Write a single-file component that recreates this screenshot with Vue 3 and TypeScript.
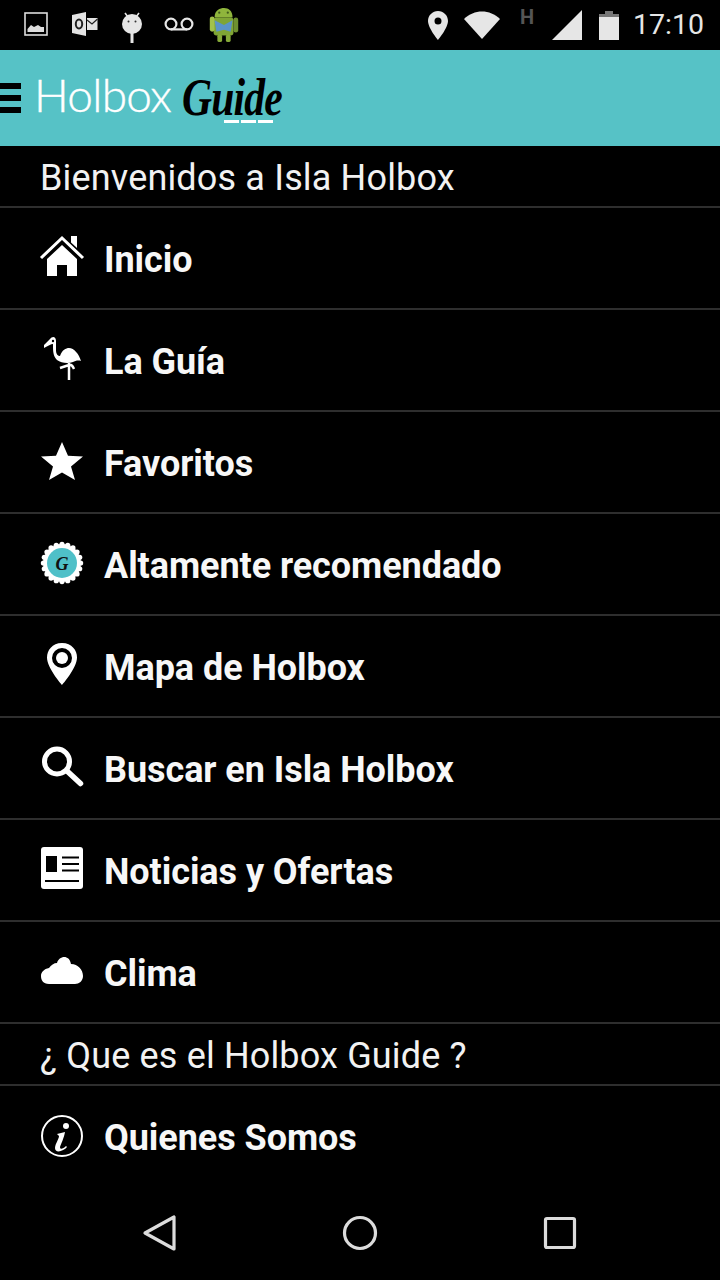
<script setup lang="ts">
interface Row { icon: string; label: string }
const rows: Row[] = [
  { icon: 'home', label: 'Inicio' },
  { icon: 'bird', label: 'La Guía' },
  { icon: 'star', label: 'Favoritos' },
  { icon: 'badge', label: 'Altamente recomendado' },
  { icon: 'pin', label: 'Mapa de Holbox' },
  { icon: 'search', label: 'Buscar en Isla Holbox' },
  { icon: 'news', label: 'Noticias y Ofertas' },
  { icon: 'cloud', label: 'Clima' },
]
const scallops = Array.from({ length: 20 }, (_, i) => {
  const a = (i * Math.PI) / 10
  return { x: 22 + 18.6 * Math.cos(a), y: 22 + 18.6 * Math.sin(a) }
})
</script>

<template>
  <div class="phone">
    <div class="status">
      <div class="status-left">
        <svg class="s-image" width="24" height="24" viewBox="0 0 24 24">
          <rect x="1" y="1" width="22" height="22" fill="none" stroke="#ddd" stroke-width="1.6" />
          <path d="M3.5 20 V17 L7 13 L10 15 L14 13 L17 15 L20 15 V20 Z" fill="#ddd" />
        </svg>
        <svg class="s-outlook" width="26" height="24" viewBox="0 0 26 24">
          <path d="M0 3 L14 0 V24 L0 21 Z" fill="#e4e4e4" />
          <ellipse cx="7" cy="12" rx="3.2" ry="4.4" fill="none" stroke="#222" stroke-width="2" />
          <rect x="15" y="6" width="10.5" height="12" fill="#e4e4e4" />
          <path d="M15 8 L20 12 L25.5 7" fill="none" stroke="#222" stroke-width="1.2" />
        </svg>
        <svg class="s-droid" width="22" height="32" viewBox="0 0 22 32">
          <path d="M4 1 L7 5 M18 1 L15 5" stroke="#e6e6e6" stroke-width="1.6" />
          <circle cx="11" cy="12" r="10" fill="#e6e6e6" />
          <circle cx="7.5" cy="9.5" r="1" fill="#333" />
          <circle cx="14.5" cy="9.5" r="1" fill="#333" />
          <rect x="9.5" y="21" width="3" height="10" fill="#e6e6e6" />
        </svg>
        <svg class="s-vm" width="30" height="14" viewBox="0 0 30 14">
          <circle cx="7" cy="7" r="5.4" fill="none" stroke="#e6e6e6" stroke-width="2.2" />
          <circle cx="23" cy="7" r="5.4" fill="none" stroke="#e6e6e6" stroke-width="2.2" />
          <path d="M7 12.4 H23" stroke="#e6e6e6" stroke-width="2.2" />
        </svg>
        <svg class="s-green" width="30" height="36" viewBox="0 0 30 38">
          <path d="M5 11 C5 3 11 1 15 1 C20 1 24 4 24 11 Z" fill="#8fb53c" />
          <rect x="4" y="11" width="21" height="19" rx="3" fill="#7fa535" />
          <rect x="0" y="10" width="5" height="16" rx="2.5" fill="#a2c24a" />
          <rect x="25" y="11" width="5" height="16" rx="2.5" fill="#6e9030" />
          <rect x="8" y="29" width="5" height="8" rx="2" fill="#86aa38" />
          <rect x="17" y="29" width="5" height="8" rx="2" fill="#86aa38" />
          <path d="M5 14 L15 19 L24 14 L22 26 L15 24 L7 26 Z" fill="#5a93c8" />
          <circle cx="10" cy="6" r="1.2" fill="#3f5a1c" />
          <circle cx="19" cy="6" r="1.2" fill="#3f5a1c" />
        </svg>
      </div>
      <div class="status-right">
        <svg class="s-pin" width="20" height="29" viewBox="0 0 20 29">
          <path fill-rule="evenodd" d="M10 0 C4.5 0 0 4.4 0 10 C0 17 10 29 10 29 C10 29 20 17 20 10 C20 4.4 15.500 0 10 0 Z M10 6.500 A3.500 3.500 0 1 1 10 13.500 A3.500 3.500 0 1 1 10 6.500 Z" fill="#e6e6e6" />
        </svg>
        <svg class="s-wifi" width="36" height="28" viewBox="0 0 36 28">
          <path d="M0 8 C10 -2 26 -2 36 8 L18 28 Z" fill="#e6e6e6" />
        </svg>
        <span class="s-h">H</span>
        <svg class="s-signal" width="30" height="30" viewBox="0 0 30 30">
          <path d="M0 30 L30 0 V30 Z" fill="#e6e6e6" />
        </svg>
        <svg class="s-battery" width="20" height="29" viewBox="0 0 20 29">
          <path d="M6 0 H14 V3 H20 V29 H0 V3 H6 Z" fill="#e6e6e6" />
          <path d="M6 0 H14 V3 H20 V6 H0 V3 H6 Z" fill="#777" />
        </svg>
        <span class="time">17:10</span>
      </div>
    </div>

    <header class="bar">
      <div class="burger"><i></i><i></i><i></i></div>
      <div class="logo">
        <span class="logo-a">Holbox</span>
        <span class="logo-b">Guide</span>
        <span class="dashes"><i></i><i></i><i></i></span>
      </div>
    </header>

    <main class="menu">
      <div class="section">Bienvenidos a Isla Holbox</div>
      <div v-for="r in rows" :key="r.icon" class="row">
        <span class="ico">
          <svg v-if="r.icon === 'home'" width="44" height="44" viewBox="0 0 44 44">
            <path d="M1 23 L22 3 L43 23" fill="none" stroke="#fff" stroke-width="3" />
            <path d="M31 1 H37 V13 L31 7.500 Z" fill="#fff" />
            <path d="M7 24 L22 10 L37 24 V41 H27 V30 H17 V41 H7 Z" fill="#fff" />
          </svg>
          <svg v-else-if="r.icon === 'bird'" width="44" height="44" viewBox="0 0 44 44">
            <path d="M4 11 L4 8 L10 2 C12 -1 16 -1 16 4 V14 C16 17 18 19 20 19 C22 13 26 11 29 11 C34 11 39 17 41 24 C38 23 35 24 33 25 C28 27 21 26 17 23 C14 20 13 16 13 10 L13 7 C11 7 8 9 4 11 Z" fill="#fff" />
            <circle cx="13" cy="4" r="1.2" fill="#000" />
            <path d="M29 26 V43 M20 31 L29 28 C32 27 33 30 34 32" fill="none" stroke="#fff" stroke-width="2.500" />
          </svg>
          <svg v-else-if="r.icon === 'star'" width="44" height="44" viewBox="0 0 44 44">
            <path d="M22 3 L28 16.800 L43 17.600 L31 27.500 L35 41 L22 33.500 L9 41 L13 27.500 L1 17.600 L16 16.800 Z" fill="#fff" />
          </svg>
          <svg v-else-if="r.icon === 'badge'" width="44" height="44" viewBox="0 0 44 44">
            <circle cx="22" cy="22" r="19" fill="#fff" />
            <circle v-for="(s, i) in scallops" :key="i" :cx="s.x" :cy="s.y" r="2.6" fill="#fff" />
            <circle cx="22" cy="22" r="15" fill="#4fc0c8" />
            <text x="22" y="28.500" class="badge-g" text-anchor="middle">G</text>
          </svg>
          <svg v-else-if="r.icon === 'pin'" width="44" height="44" viewBox="0 0 44 44">
            <path fill-rule="evenodd" d="M22 0 C12 0 7 7.500 7 14.500 C7 25 22 42 22 42 C22 42 37 25 37 14.500 C37 7.500 32 0 22 0 Z M22 5 A10 10 0 1 1 22 25 A10 10 0 1 1 22 5 Z" fill="#fff" />
            <circle cx="22" cy="15" r="6" fill="#fff" />
          </svg>
          <svg v-else-if="r.icon === 'search'" width="44" height="44" viewBox="0 0 44 44">
            <circle cx="17" cy="16.500" r="12.500" fill="none" stroke="#fff" stroke-width="5" />
            <path d="M27 26 L40.500 38.500" stroke="#fff" stroke-width="5.500" stroke-linecap="round" />
          </svg>
          <svg v-else-if="r.icon === 'news'" width="44" height="44" viewBox="0 0 44 44">
            <rect x="1" y="0" width="42" height="42" rx="3" fill="#fff" />
            <rect x="6" y="9" width="11" height="16" fill="#000" />
            <path d="M22 10.500 H39 M22 17 H39 M22 23.500 H39 M5 34 H39" stroke="#000" stroke-width="2.200" />
          </svg>
          <svg v-else-if="r.icon === 'cloud'" width="44" height="44" viewBox="0 0 44 44">
            <path d="M9 35 C3 35 1 31 1 27 C1 23 4 20 9 19 C11 16 14 14 17 14 C19 7 29 5 31 15 C38 15 43 21 43 27 C43 32 39 35 35 35 Z" fill="#fff" />
          </svg>
        </span>
        <span class="label">{{ r.label }}</span>
      </div>
      <div class="section second">¿ Que es el Holbox Guide ?</div>
      <div class="row last">
        <span class="ico">
          <svg width="44" height="44" viewBox="0 0 44 44">
            <circle cx="22" cy="23" r="20" fill="none" stroke="#fff" stroke-width="2" />
            <circle cx="26" cy="13" r="3" fill="#fff" />
            <path d="M17 21 L25 19 C24 25 21 31 20 34 C20 37 23 36 26 33 L27 34 C24 38 15 41 15 35 C15 31 19 26 19 23 Z" fill="#fff" />
          </svg>
        </span>
        <span class="label">Quienes Somos</span>
      </div>
    </main>

    <nav class="nav">
      <svg width="36" height="38" viewBox="0 0 36 38">
        <path d="M32 3 V35 L3 19 Z" fill="none" stroke="#dcdcdc" stroke-width="3.200" stroke-linejoin="round" />
      </svg>
      <svg width="36" height="36" viewBox="0 0 36 36">
        <circle cx="18" cy="18" r="15.500" fill="none" stroke="#dcdcdc" stroke-width="3.200" />
      </svg>
      <svg width="36" height="36" viewBox="0 0 36 36">
        <rect x="3.500" y="3.500" width="29" height="29" rx="1.500" fill="none" stroke="#dcdcdc" stroke-width="3.200" />
      </svg>
    </nav>
  </div>
</template>

<style scoped>
.phone {
  width: 720px;
  height: 1280px;
  background: #000;
  color: #fff;
  font-family: Roboto, "Liberation Sans", sans-serif;
  display: flex;
  flex-direction: column;
  overflow: hidden;
}
.status {
  height: 50px;
  flex: none;
  display: flex;
  justify-content: space-between;
  align-items: center;
}
.status-left, .status-right { display: flex; align-items: center; height: 50px; }
.s-image { margin-left: 24px; margin-top: -2px; }
.s-outlook { margin-left: 24px; margin-top: -2px; }
.s-droid { margin-left: 23px; margin-top: 5px; }
.s-vm { margin-left: 21px; margin-top: -3px; }
.s-green { margin-left: 15px; margin-top: 0; }
.s-pin { margin-right: 16px; }
.s-wifi { margin-right: 20px; margin-top: -1px; }
.s-h {
  width: 17px;
  margin-right: 15px;
  margin-top: -16px;
  font-size: 20px;
  font-weight: 700;
  color: #555;
  line-height: 20px;
}
.s-signal { margin-right: 17px; }
.s-battery { margin-right: 14px; }
.time {
  font-size: 28.5px;
  line-height: 50px;
  color: #e6e6e6;
  margin-right: 16px;
}
.bar {
  height: 96px;
  flex: none;
  background: #56c2c6;
  display: flex;
  align-items: center;
}
.burger {
  width: 21px;
  display: flex;
  flex-direction: column;
  gap: 6px;
}
.burger i { display: block; height: 6px; background: #000; }
.logo {
  position: relative;
  display: flex;
  align-items: baseline;
  margin-left: 13px;
  margin-top: -8px;
}
.logo-a {
  font-family: Lato, sans-serif;
  font-weight: 300;
  font-size: 46px;
  letter-spacing: -0.7px;
  color: #fff;
  -webkit-text-stroke: 0.4px #fff;
}
.logo-b {
  display: inline-block;
  width: 98px;
  margin-left: 11px;
  font-family: "Liberation Serif", serif;
  font-weight: 700;
  font-style: italic;
  font-size: 52px;
  letter-spacing: -1px;
  color: #000;
  transform: translateY(3px) scaleX(0.8);
  transform-origin: left center;
}
.dashes {
  position: absolute;
  left: 190px;
  bottom: 1px;
  display: flex;
  gap: 2px;
}
.dashes i { display: block; width: 15px; height: 3px; background: #fff; }
.section {
  height: 62px;
  flex: none;
  box-sizing: border-box;
  padding-left: 40px;
  font-size: 36px;
  letter-spacing: 0.16px;
  line-height: 64px;
  border-bottom: 2px solid #2e2e2e;
  color: #f2f2f2;
}
.row {
  height: 102px;
  flex: none;
  box-sizing: border-box;
  display: flex;
  align-items: center;
  padding-left: 40px;
  padding-top: 2px;
  border-bottom: 2px solid #2e2e2e;
}
.row.last { height: 99px; border-bottom: none; }
.ico { width: 44px; height: 44px; flex: none; display: block; margin-bottom: 4px; }
.ico svg { display: block; overflow: visible; }
.label {
  margin-left: 20px;
  margin-top: 2px;
  font-size: 36px;
  letter-spacing: -0.06px;
  font-weight: 700;
  color: #f7f7f7;
}
.badge-g {
  font-family: "Liberation Serif", serif;
  font-style: italic;
  font-weight: 700;
  font-size: 18px;
  fill: #111;
}
.nav {
  flex: 1;
  display: flex;
  align-items: center;
  justify-content: space-around;
  padding: 0 60px;
}
</style>
